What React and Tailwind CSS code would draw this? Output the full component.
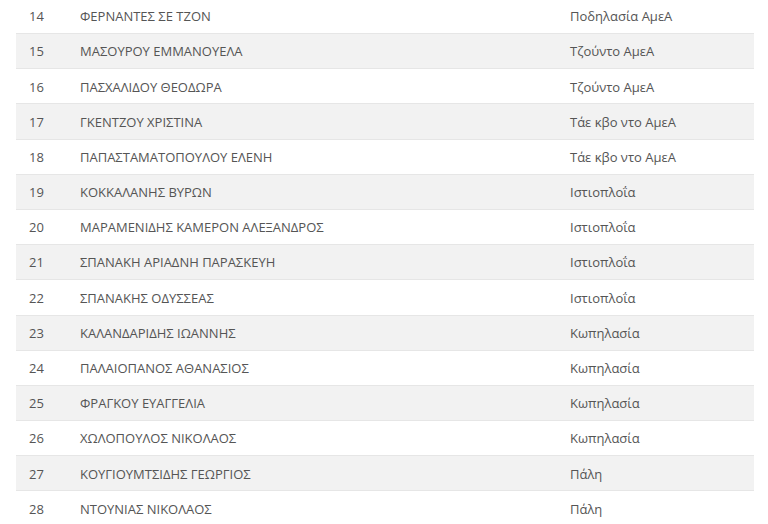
const rows = [
  [14, "ΦΕΡΝΑΝΤΕΣ ΣΕ ΤΖΟΝ", "Ποδηλασία ΑμεΑ"],
  [15, "ΜΑΣΟΥΡΟΥ ΕΜΜΑΝΟΥΕΛΑ", "Τζούντο ΑμεΑ"],
  [16, "ΠΑΣΧΑΛΙΔΟΥ ΘΕΟΔΩΡΑ", "Τζούντο ΑμεΑ"],
  [17, "ΓΚΕΝΤΖΟΥ ΧΡΙΣΤΙΝΑ", "Τάε κβο ντο ΑμεΑ"],
  [18, "ΠΑΠΑΣΤΑΜΑΤΟΠΟΥΛΟΥ ΕΛΕΝΗ", "Τάε κβο ντο ΑμεΑ"],
  [19, "ΚΟΚΚΑΛΑΝΗΣ ΒΥΡΩΝ", "Ιστιοπλοΐα"],
  [20, "ΜΑΡΑΜΕΝΙΔΗΣ ΚΑΜΕΡΟΝ ΑΛΕΞΑΝΔΡΟΣ", "Ιστιοπλοΐα"],
  [21, "ΣΠΑΝΑΚΗ ΑΡΙΑΔΝΗ ΠΑΡΑΣΚΕΥΗ", "Ιστιοπλοΐα"],
  [22, "ΣΠΑΝΑΚΗΣ ΟΔΥΣΣΕΑΣ", "Ιστιοπλοΐα"],
  [23, "ΚΑΛΑΝΔΑΡΙΔΗΣ ΙΩΑΝΝΗΣ", "Κωπηλασία"],
  [24, "ΠΑΛΑΙΟΠΑΝΟΣ ΑΘΑΝΑΣΙΟΣ", "Κωπηλασία"],
  [25, "ΦΡΑΓΚΟΥ ΕΥΑΓΓΕΛΙΑ", "Κωπηλασία"],
  [26, "ΧΩΛΟΠΟΥΛΟΣ ΝΙΚΟΛΑΟΣ", "Κωπηλασία"],
  [27, "ΚΟΥΓΙΟΥΜΤΣΙΔΗΣ ΓΕΩΡΓΙΟΣ", "Πάλη"],
  [28, "ΝΤΟΥΝΙΑΣ ΝΙΚΟΛΑΟΣ", "Πάλη"],
];

export default function App() {
  return (
    <div className="h-[524px] overflow-hidden bg-white px-4 font-['Open_Sans',sans-serif] text-[13px] text-[#555]">
      <div className="-mt-[2.2px] w-[738px]">
        {rows.map(([n, name, sport], i) => (
          <div
            key={n}
            className={`grid h-[35.2px] grid-cols-[64px_490px_1fr] items-center border-t border-[#e6e6e6] pt-[2px] ${i % 2 === 1 ? "bg-[#f2f2f2]" : "bg-white"}`}
          >
            <span className="pl-[13px]">{n}</span>
            <span>{name}</span>
            <span>{sport}</span>
          </div>
        ))}
      </div>
    </div>
  );
}
